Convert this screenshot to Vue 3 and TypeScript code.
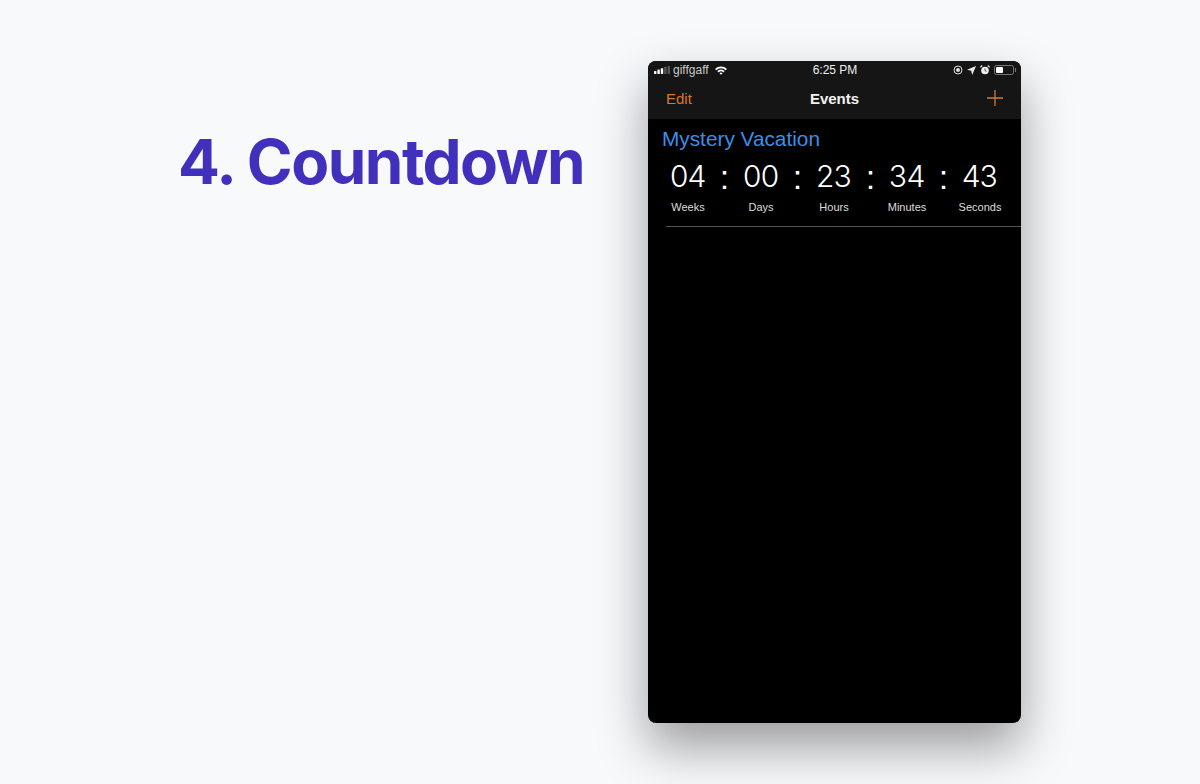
<script setup lang="ts">
interface Unit {
  value: string
  label: string
}

const units: Unit[] = [
  { value: '04', label: 'Weeks' },
  { value: '00', label: 'Days' },
  { value: '23', label: 'Hours' },
  { value: '34', label: 'Minutes' },
  { value: '43', label: 'Seconds' },
]
</script>

<template>
  <main class="page">
    <h1 class="heading">4. Countdown</h1>
    <section class="phone">
      <header class="chrome">
        <div class="status">
          <div class="status-left">
            <svg class="signal" width="16" height="8" viewBox="0 0 16 8">
              <rect x="0" y="5" width="2.4" height="3" rx="0.5" fill="#fff" />
              <rect x="3.4" y="3.6" width="2.4" height="4.4" rx="0.5" fill="#fff" />
              <rect x="6.8" y="2.2" width="2.4" height="5.8" rx="0.5" fill="#fff" />
              <rect x="10.2" y="0.8" width="2.4" height="7.2" rx="0.5" fill="#555" />
              <rect x="13.6" y="0" width="2.4" height="8" rx="0.5" fill="#555" />
            </svg>
            <span class="carrier">giffgaff</span>
            <svg class="wifi" width="12" height="9" viewBox="0 0 12 9">
              <path d="M0 2.9A8.6 8.6 0 0 1 12 2.9L10.7 4.2A6.8 6.8 0 0 0 1.3 4.2Z" fill="#fff" />
              <path d="M2.3 5.1A5.3 5.3 0 0 1 9.7 5.1L8.4 6.4A3.5 3.5 0 0 0 3.6 6.4Z" fill="#fff" />
              <path d="M4.5 7.2A2.2 2.2 0 0 1 7.5 7.2L6 8.8Z" fill="#fff" />
            </svg>
          </div>
          <span class="clock">6:25 PM</span>
          <div class="status-right">
            <svg width="10" height="10" viewBox="0 0 10 10">
              <circle cx="5" cy="5" r="4" fill="none" stroke="#ddd" stroke-width="1" />
              <circle cx="5" cy="5" r="2" fill="#ddd" />
            </svg>
            <svg width="9" height="9" viewBox="0 0 9 9">
              <path d="M9 0 0 3.8 4.2 4.8 5.2 9Z" fill="#eee" />
            </svg>
            <svg width="10" height="10" viewBox="0 0 10 10">
              <circle cx="5" cy="5.5" r="3.8" fill="#eee" />
              <path d="M5 3.5V5.6L6.4 6.4" fill="none" stroke="#222" stroke-width="0.8" />
              <path d="M0.4 2.2 2.2 0.5M9.6 2.2 7.8 0.5" stroke="#eee" stroke-width="1.2" />
            </svg>
            <div class="battery"><span class="charge"></span></div>
          </div>
        </div>
        <nav class="nav">
          <span class="edit">Edit</span>
          <span class="title">Events</span>
          <svg class="plus" width="16" height="16" viewBox="0 0 16 16">
            <path d="M8 0V16M0 8H16" stroke="#d9782a" stroke-width="1.3" />
          </svg>
        </nav>
      </header>
      <article class="event">
        <h2 class="event-name">Mystery Vacation</h2>
        <div class="countdown">
          <template v-for="(unit, i) in units" :key="unit.label">
            <div class="unit">
              <span class="digits">{{ unit.value }}</span>
              <span class="label">{{ unit.label }}</span>
            </div>
            <span v-if="i < units.length - 1" class="colon">:</span>
          </template>
        </div>
        <div class="divider"></div>
      </article>
    </section>
  </main>
</template>

<style>
html,
body {
  margin: 0;
  background: #f8f9fb;
}
</style>

<style scoped>
.page {
  box-sizing: border-box;
  width: 1200px;
  height: 784px;
  padding-top: 61px;
  display: grid;
  grid-template-columns: 648px 373px;
  align-items: start;
  background: #f8f9fb;
  overflow: hidden;
  font-family: "Liberation Sans", Arial, sans-serif;
}
.heading {
  margin: 0;
  padding: 62px 0 0 178px;
  font-family: Inter, sans-serif;
  font-size: 62px;
  line-height: 78px;
  font-weight: 700;
  letter-spacing: -1.5px;
  color: #4130bb;
  white-space: nowrap;
}
.phone {
  height: 662px;
  background: #000;
  border-radius: 8px;
  overflow: hidden;
  box-shadow: 0 24px 50px rgba(0, 0, 0, 0.38);
}
.chrome {
  height: 58px;
  background: #151515;
  display: flex;
  flex-direction: column;
}
.status {
  height: 18px;
  padding: 0 5px 0 6px;
  display: grid;
  grid-template-columns: 1fr auto 1fr;
  align-items: center;
  color: #ddd;
  font-size: 12px;
}
.status-left {
  display: flex;
  align-items: center;
  gap: 3px;
}
.carrier {
  color: #ccc;
  margin-right: 3px;
}
.clock {
  color: #eee;
}
.status-right {
  display: flex;
  justify-content: flex-end;
  align-items: center;
  gap: 4px;
}
.battery {
  position: relative;
  box-sizing: border-box;
  width: 20px;
  height: 10px;
  border: 1px solid #777;
  border-radius: 2.5px;
  padding: 1px;
  margin: 0 2px 0 0;
}
.battery::after {
  content: "";
  position: absolute;
  right: -3px;
  top: 2px;
  width: 1.5px;
  height: 4px;
  background: #777;
}
.charge {
  display: block;
  width: 7px;
  height: 100%;
  background: #fff;
  border-radius: 1px;
}
.nav {
  flex: 1;
  padding: 0 18px 1px;
  display: grid;
  grid-template-columns: 1fr auto 1fr;
  align-items: center;
  font-size: 15px;
}
.edit {
  color: #d9782a;
}
.title {
  color: #f2f2f2;
  font-weight: 700;
}
.plus {
  justify-self: end;
  margin-top: -1px;
}
.event {
  padding-top: 7px;
}
.event-name {
  margin: 0 0 0 14px;
  font-size: 20.8px;
  line-height: 25px;
  font-weight: 400;
  color: #3a8fe8;
}
.countdown {
  margin-top: 7px;
  padding-left: 9.5px;
  display: flex;
  align-items: flex-start;
}
.unit {
  width: 61px;
  display: flex;
  flex-direction: column;
  align-items: center;
}
.digits {
  height: 36px;
  line-height: 36px;
  font-family: Inter, sans-serif;
  font-size: 30px;
  font-weight: 300;
  font-variant-numeric: tabular-nums;
  letter-spacing: -1.6px;
  padding-right: 1.6px;
  color: #fff;
  white-space: nowrap;
}
.label {
  margin-top: 6px;
  font-size: 11px;
  line-height: 14px;
  color: #ddd;
}
.colon {
  width: 12px;
  height: 36px;
  line-height: 38px;
  text-align: center;
  font-size: 34px;
  font-weight: 400;
  color: #fff;
}
.divider {
  margin: 12px 0 0 18px;
  height: 1px;
  background: #555;
}
</style>
